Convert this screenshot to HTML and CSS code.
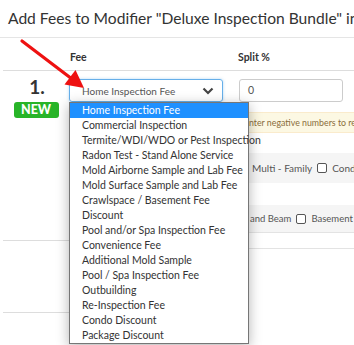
FILE: index.html
```html
<!DOCTYPE html>
<html lang="en">
<head>
  <meta charset="UTF-8">
  <title>Add Fees to Modifier</title>
  <link rel="stylesheet" href="styles.css">
</head>
<body>

  <div class="modal">
    <h2 class="modal-title">Add Fees to Modifier "Deluxe Inspection Bundle" in Package</h2>

    <div class="fees">
      <div class="fees-head">
        <span></span>
        <span>Fee</span>
        <span>Split %</span>
      </div>

      <div class="fee-row">
        <div class="num-col">
          <div class="num">1.</div>
          <span class="badge-new">NEW</span>
        </div>

        <div class="fee-col">
          <div class="select">
            <span>Home Inspection Fee</span>
            <svg class="chevron" width="12" height="8" viewBox="0 0 12 8">
              <path d="M1.5 1.5 L6 6 L10.5 1.5" fill="none" stroke="#444" stroke-width="2.2"/>
            </svg>
          </div>
        </div>

        <div class="split-col">
          <div class="input">0</div>
          <div class="alert">Enter negative numbers to reduce the package price</div>
        </div>

        <div class="options">
          <div class="band">
            <div class="band-lead"><span class="check"></span>Single Family</div>
            <span>Multi - Family</span>
            <span class="check"></span>
            <span>Condo</span>
            <span class="check"></span>
            <span>Townhome</span>
          </div>
          <div class="band-gap"></div>
          <div class="band band-last">
            <div class="band-lead"><span class="check"></span>Slab <span class="check"></span>Pier</div>
            <span>and Beam</span>
            <span class="check"></span>
            <span>Basement</span>
          </div>
          <div class="band-foot"></div>
        </div>
      </div>

      <div class="fee-row-2">
        <div class="num-col-2"></div>
      </div>
    </div>

    <!-- open select list -->
    <ul class="dropdown">
      <li class="active">Home Inspection Fee</li>
      <li>Commercial Inspection</li>
      <li>Termite/WDI/WDO or Pest Inspection</li>
      <li>Radon Test - Stand Alone Service</li>
      <li>Mold Airborne Sample and Lab Fee</li>
      <li>Mold Surface Sample and Lab Fee</li>
      <li>Crawlspace / Basement Fee</li>
      <li>Discount</li>
      <li>Pool and/or Spa Inspection Fee</li>
      <li>Convenience Fee</li>
      <li>Additional Mold Sample</li>
      <li>Pool / Spa Inspection Fee</li>
      <li>Outbuilding</li>
      <li>Re-Inspection Fee</li>
      <li>Condo Discount</li>
      <li>Package Discount</li>
    </ul>

    <!-- annotation arrow -->
    <svg class="arrow" width="90" height="95" viewBox="0 0 90 95">
      <line x1="22" y1="41" x2="72" y2="79" stroke="#ee1111" stroke-width="3.2" stroke-linecap="round"/>
      <polygon points="84,88 64.5,84.5 75.5,70" fill="#ee1111"/>
    </svg>
  </div>

</body>
</html>
```

FILE: styles.css
```css
* {
  box-sizing: border-box;
}

body {
  margin: 0;
  font-family: Lato, 'Open Sans', sans-serif;
  color: #333;
  background: #fff;
  overflow: hidden;
}

.modal {
  position: relative;
  width: 354px;
  height: 345px;
  overflow: hidden;
}

.modal-title {
  margin: 0;
  padding: 9px 0 0 8px;
  height: 38px;
  font-size: 15.6px;
  font-weight: 400;
  white-space: nowrap;
  color: #333;
  border-bottom: 1px solid #e5e5e5;
}

.fees {
  margin-left: 3px;
}

.fees-head {
  display: grid;
  grid-template-columns: 66px 169px 1fr;
  height: 33px;
  align-items: end;
  padding-bottom: 7px;
  font-size: 10.5px;
  font-weight: 700;
  border-bottom: 1px solid #ddd;
}

.fees-head span:nth-child(2) {
  padding-left: 1px;
}

.fee-row {
  display: grid;
  grid-template-columns: 66px 170px 1fr;
}

.num-col {
  grid-row: 1 / 3;
  height: 170px;
  display: flex;
  flex-direction: column;
  align-items: center;
  padding-top: 6px;
  border-bottom: 1px solid #ddd;
}

.num {
  font-size: 19px;
  font-weight: 700;
  line-height: 20px;
  padding-left: 2px;
}

.badge-new {
  margin-top: 5px;
  width: 45px;
  height: 16px;
  background: #28b428;
  color: #fff;
  font-size: 12.5px;
  font-weight: 900;
  line-height: 16px;
  text-align: center;
  border-radius: 3px;
}

.fee-col {
  padding-top: 8px;
}

.select {
  width: 154px;
  height: 23px;
  display: flex;
  align-items: center;
  justify-content: space-between;
  padding: 0 8px 0 12px;
  border: 1px solid #66afe9;
  border-radius: 3px;
  font-size: 10px;
  color: #555;
  box-shadow: 0 0 3px rgba(102, 175, 233, 0.5);
}

.split-col {
  padding-top: 8px;
}

.input {
  width: 104px;
  height: 23px;
  padding-left: 8px;
  border: 1px solid #ccc;
  border-radius: 3px;
  font-size: 10.5px;
  line-height: 21px;
  color: #555;
}

.alert {
  margin-top: 10px;
  height: 21px;
  padding-left: 5px;
  background: #fcf8e3;
  border-top: 1px solid #faebcc;
  border-bottom: 1px solid #faebcc;
  color: #8a6d3b;
  font-size: 8.8px;
  line-height: 19px;
  white-space: nowrap;
}

.options {
  grid-column: 2 / 4;
  margin-top: 20px;
  font-size: 10px;
  color: #555;
}

.band {
  display: flex;
  align-items: center;
  gap: 5px;
  height: 30px;
  background: #f5f5f5;
  white-space: nowrap;
}

.band-lead {
  width: 178px;
  overflow: hidden;
  display: flex;
  align-items: center;
  justify-content: flex-end;
  gap: 5px;
}

.band-gap {
  height: 22px;
}

.band-last {
  height: 28px;
  border-bottom: 1px solid #e3e3e3;
  font-size: 9.5px;
}

.band-last .band-lead {
  width: 176px;
}

.band-foot {
  height: 16px;
  border-bottom: 1px solid #e3e3e3;
}

.check {
  flex: none;
  width: 10px;
  height: 10px;
  border: 1px solid #555;
  border-radius: 2px;
  background: #fff;
}

.fee-row-2 {
  height: 64px;
}

.num-col-2 {
  width: 66px;
  height: 64px;
  border-bottom: 1px solid #ddd;
}

/* Open select list */
.dropdown {
  position: absolute;
  left: 69px;
  top: 102px;
  width: 180px;
  margin: 0;
  padding: 0;
  list-style: none;
  background: #fff;
  border: 1px solid #767676;
  box-shadow: 0 3px 12px rgba(0, 0, 0, 0.3);
  font-size: 10.5px;
  color: #333;
}

.dropdown li {
  height: 15px;
  line-height: 15px;
  padding-left: 12px;
  white-space: nowrap;
}

.dropdown li.active {
  background: #1e90ff;
  color: #fff;
}

.arrow {
  position: absolute;
  left: 0;
  top: 0;
}
```
